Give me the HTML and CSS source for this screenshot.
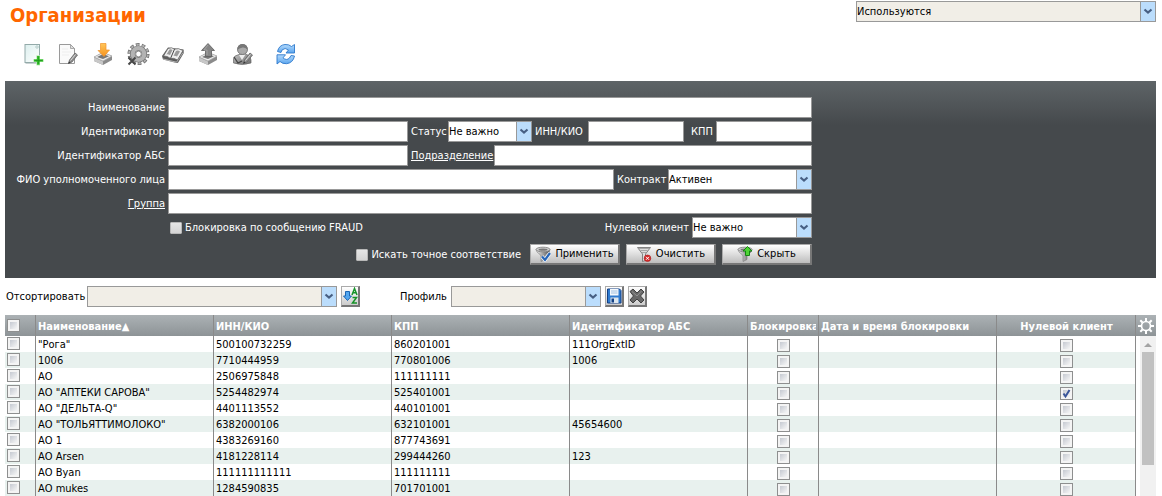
FILE: index.html
```html
<!DOCTYPE html>
<html lang="ru">
<head>
<meta charset="utf-8">
<title>Организации</title>
<link rel="stylesheet" href="styles.css">
</head>
<body>
<svg class="defs" aria-hidden="true">
  <defs>
    <linearGradient id="orange" x1="0" y1="0" x2="0" y2="1"><stop offset="0" stop-color="#ffc65a"/><stop offset="1" stop-color="#f7931e"/></linearGradient>
    <linearGradient id="gray" x1="0" y1="0" x2="1" y2="1"><stop offset="0" stop-color="#c4c4c4"/><stop offset="1" stop-color="#6c6c6c"/></linearGradient>
    <linearGradient id="steel" x1="0" y1="0" x2="1" y2="0"><stop offset="0" stop-color="#f4f4f4"/><stop offset="1" stop-color="#4c4c4c"/></linearGradient>
    <linearGradient id="sheet" x1="0" y1="0" x2="1" y2="1"><stop offset="0" stop-color="#dcefee"/><stop offset="1" stop-color="#ffffff"/></linearGradient>
    <linearGradient id="blue" x1="0" y1="0" x2="0" y2="1"><stop offset="0" stop-color="#b4dafc"/><stop offset="1" stop-color="#5aa5ee"/></linearGradient>
    <g id="tray">
      <path d="M3 15 12 10 21 14 21 18 12 23 3 19Z" fill="#8b8b8b"/>
      <path d="M3 15 12 10.500 21 14 12 19Z" fill="#ededed" stroke="#aaa" stroke-width=".7"/>
      <path d="M6 15 12 12 18 14.300 12 17Z" fill="#777"/>
      <path d="M3 15.500 12 19.500V23L3 19Z" fill="#c8c8c8"/>
    </g>
    <g id="pencil"><path d="M12.500 21.500 13.500 18 19 11 21.500 13 16 20Z" fill="#8e8e8e" stroke="#666" stroke-width=".8"/><path d="M14.500 18.500 19.500 12.500" stroke="#ddd"/><path d="M12.200 21.800 13 19.500 14.500 20.800Z" fill="#333"/></g>
    <g id="funnel"><path d="M1 3.500 C1 7 6 8 6 10V15.500L10 13.500V10C10 8 15 7 15 3.500Z" fill="url(#steel)" stroke="#777" stroke-width=".6"/><ellipse cx="8" cy="3.500" rx="7" ry="2.300" fill="#d6d6d6" stroke="#777" stroke-width=".8"/><ellipse cx="8" cy="3.700" rx="4.500" ry="1.100" fill="#777"/></g>
  </defs>
</svg>

<header class="page-head">
  <h1 class="title">Организации</h1>
  <select class="select muted usage" aria-label="Показывать"><option>Используются</option></select>
</header>

<nav class="toolbar" aria-label="Действия">
  <button class="tool" type="button" aria-label="Создать"><svg viewBox="0 0 24 24">
    <rect x="4" y="2.500" width="14.500" height="18" fill="url(#sheet)" stroke="#93aaa9"/><path d="M4.500 21.500H19" stroke="#c9d2d2"/><circle cx="16" cy="5" r="1.200" fill="#fff" stroke="#8fb5b0" stroke-width=".7"/>
    <path d="M15.500 13.500H19V17H22.500V20H19V23.200H15.500V20H12.500V17H15.500Z" fill="#39c22f" stroke="#fff" stroke-width=".5"/><path d="M17.300 14.500V22M13.500 18.500H21.500" stroke="#20941d" stroke-width=".8"/></svg></button>
  <button class="tool" type="button" aria-label="Изменить"><svg viewBox="0 0 24 24">
    <path d="M3.500 2.500H14.500L18.500 6.500V21.500H3.500Z" fill="#fafafa" stroke="#9a9a9a"/><path d="M14.500 2.500V6.500H18.500Z" fill="#ddd" stroke="#9a9a9a" stroke-width=".8"/><path d="M6 7H12M6 10H15M6 13H13" stroke="#eee"/><use href="#pencil"/></svg></button>
  <button class="tool" type="button" aria-label="Импорт"><svg viewBox="0 0 24 24"><use href="#tray"/>
    <path d="M9.500 1.500H15V8H18.500L13 14.500 7 8.500H9.500Z" fill="url(#orange)" stroke="#f0942b" stroke-width=".7"/></svg></button>
  <button class="tool" type="button" aria-label="Настройки"><svg viewBox="0 0 24 24">
    <circle cx="12.500" cy="12" r="9.200" fill="none" stroke="#6f6f6f" stroke-width="3.600" stroke-dasharray="3.600 2.180"/>
    <circle cx="12.500" cy="12" r="9" fill="none" stroke="#b0b0b0" stroke-width="2.600" stroke-dasharray="2.300 3.355" stroke-dashoffset="-.6"/>
    <circle cx="12.500" cy="12" r="5.800" fill="none" stroke="#747474" stroke-width="5.600"/><circle cx="12.500" cy="12" r="5.800" fill="none" stroke="#b3b3b3" stroke-width="4.200"/><circle cx="12.500" cy="12" r="2.800" fill="#fff" stroke="#777" stroke-width=".8"/>
    <path d="M2.500 15.500 9.500 22.500M9.500 15.500 2.500 22.500" stroke="#484848" stroke-width="2"/></svg></button>
  <button class="tool" type="button" aria-label="Справочник"><svg viewBox="0 0 24 24">
    <path d="M7 5.500 22.500 7.500 22.800 11 17 20.800 15.500 21 2 17.500 1 14Z" fill="#5d5d5d"/><path d="M2 17 15.500 20.200 22 10.500" fill="none" stroke="#ccc" stroke-width=".8"/><path d="M2.500 14 7 6.500Q11 4.800 13.500 7.200Q17 5.500 22 8.500L16.500 18Q12.500 15.500 9.500 16.500Q6.500 13.800 2.500 14Z" fill="#eee" stroke="#666" stroke-width=".8"/><path d="M13.500 7.200 9.500 16.500" stroke="#444"/><path d="M8.500 7.500Q10 7 11.500 8L9 13Q7 12 5.500 12.500ZM15 9Q17 8 19 9.500L16 14.500Q14 13.500 12.500 14Z" fill="#999"/></svg></button>
  <button class="tool" type="button" aria-label="Экспорт"><svg viewBox="0 0 24 24"><use href="#tray"/>
    <path d="M12 1.500 18.500 8.500H15.500V14.500H9.500V8.500H5.500Z" fill="#858585" stroke="#5d5d5d" stroke-width=".8"/><path d="M12 3 8 8H11V13" fill="none" stroke="#aaa" stroke-width=".8"/></svg></button>
  <button class="tool" type="button" aria-label="Пользователь"><svg viewBox="0 0 24 24">
    <path d="M2.500 21V16.500Q3 13.500 8 12.500L15 12Q20 14 20 18V21Q11 24 2.500 21Z" fill="url(#gray)" stroke="#686868" stroke-width=".7"/><path d="M8 13 11 18 14.500 12.500Z" fill="#eee"/><circle cx="11.500" cy="7.500" r="5" fill="#aaa" stroke="#6b6b6b" stroke-width=".8"/><path d="M6.500 8Q6 2 11.500 2T16.500 8Q15 5 11.500 5.500T6.500 8Z" fill="#777"/><path d="M3 15 7 21 11 19" fill="none" stroke="#444" stroke-width="1.300"/><use href="#pencil"/></svg></button>
  <button class="tool refresh" type="button" aria-label="Обновить"><svg viewBox="0 0 24 24">
    <g fill="url(#blue)" stroke="#2d78cc" stroke-width=".9"><path d="M3.500 9.500Q5 3 11 2.500 15 2.200 17.500 4.500L20.500 2.500V11H12L14.500 8Q11 5 8 8L7 10.500Z"/><path d="M20.500 14Q19 21 12.500 21.700 8.500 22 6 19.500L3 22V12.800H11.500L9 15.800Q12.500 19 15.500 16L17 13.500Z"/></g></svg></button>
</nav>

<form class="filter">
  <div class="fields">
    <div class="row"><label class="lead" for="name">Наименование</label><input class="text grow" id="name" type="text"></div>
    <div class="row"><label class="lead" for="ident">Идентификатор</label><input class="text grow" id="ident" type="text">
      <label class="cap w34" for="status">Статус</label><select class="select w84" id="status"><option>Не важно</option></select>
      <label class="cap w50" for="inn">ИНН/КИО</label><input class="text w96" id="inn" type="text">
      <label class="cap w26 right" for="kpp">КПП</label><input class="text w96" id="kpp" type="text"></div>
    <div class="row"><label class="lead" for="abs">Идентификатор АБС</label><input class="text grow" id="abs" type="text">
      <a class="cap w80" href="#">Подразделение</a><input class="text w318" type="text" aria-label="Подразделение"></div>
    <div class="row"><label class="lead" for="person">ФИО уполномоченного лица</label><input class="text grow" id="person" type="text">
      <label class="cap w48" for="contract">Контракт</label><select class="select w144" id="contract"><option>Активен</option></select></div>
    <div class="row"><span class="lead"><a href="#">Группа</a></span><input class="text grow" type="text" aria-label="Группа"></div>
    <div class="row"><span class="lead"></span><span class="tick grow"><input class="flat" id="fraud" type="checkbox"><label for="fraud">Блокировка по сообщению FRAUD</label></span>
      <label class="cap" for="zero">Нулевой клиент</label><select class="select w120" id="zero"><option>Не важно</option></select></div>
    <div class="row actions"><span class="tick"><input class="flat" id="exact" type="checkbox"><label for="exact">Искать точное соответствие</label></span>
      <button class="btn" type="button"><svg viewBox="0 0 16 16"><use href="#funnel"/><path d="M7 10.500 10 14 15 7" fill="none" stroke="#fff" stroke-width="3.500"/><path d="M7 10.500 10 14 15 7" fill="none" stroke="#2766b8" stroke-width="2.300"/></svg>Применить</button>
      <button class="btn" type="button"><svg viewBox="0 0 16 16"><path d="M1.500 1.500H14.500L9.500 8V14.500L6.500 15.500V8Z" fill="#ddd" stroke="#777" stroke-width=".9"/><path d="M3 2.500H13M4.500 4.500H11.500M6 6.500H10" stroke="#999" stroke-width=".8"/><circle cx="11.500" cy="12.300" r="3.300" fill="#d52b2b" stroke="#a31515" stroke-width=".6"/><path d="M10 10.800 13 13.800M13 10.800 10 13.800" stroke="#fff"/></svg>Очистить</button>
      <button class="btn" type="button"><svg viewBox="0 0 16 16"><use href="#funnel"/><path d="M10.500 .5 15 5H12.500V9.500H8.500V5H6Z" fill="#4ed434" stroke="#168414"/></svg>Скрыть</button></div>
  </div>
</form>

<section class="sorting">
  <label class="w77" for="sort">Отсортировать</label><select class="select muted w250" id="sort"><option></option></select>
  <button class="mini" type="button" aria-label="Направление сортировки"><svg viewBox="0 0 16 18"><path d="M3.500 4.500H7.500V9H9.500L5.500 13.500 1.500 9H3.500Z" fill="#52a6ef" stroke="#1b66b4"/><path d="M10 8 12.500 1.500 15 8M11 5.800H14M10.500 10.500H14.500L10.500 16H15" fill="none" stroke="#169329" stroke-width="1.500"/></svg></button>
  <label class="profile" for="profile">Профиль</label><select class="select muted w150" id="profile"><option></option></select>
  <button class="mini" type="button" aria-label="Сохранить профиль"><svg viewBox="0 0 16 18"><path d="M1.500 2H13.500L15 3.500V16H1.500Z" fill="#2f7bd0" stroke="#123f83"/><rect x="4" y="2" width="8.500" height="6.500" fill="#f4f8fc"/><path d="M5 4H11.500M5 6H11.500" stroke="#8eb1d9" stroke-width=".8"/><rect x="4.500" y="10.500" width="8" height="5.500" fill="#dce6ee"/><rect x="5.500" y="11.500" width="2.500" height="4" fill="#123f83"/></svg></button>
  <button class="mini" type="button" aria-label="Удалить профиль"><svg viewBox="0 0 16 18"><path d="M1 4.500 4 2 8 6 12 2 15 5 11.500 9 15 13 12 16 8 12 4 16 1 13 4.500 9Z" fill="#686868" stroke="#414141"/><path d="M3 4.500 8 9 12.500 4" fill="none" stroke="#929292"/></svg></button>
</section>

<main class="list">
  <table class="grid">
    <colgroup><col class="c-tick"><col class="c-data"><col class="c-data"><col class="c-data"><col class="c-data"><col class="c-block"><col class="c-data"><col></colgroup>
    <thead><tr><th><input class="box" type="checkbox" aria-label="Выбрать все"></th><th>Наименование▲</th><th>ИНН/КИО</th><th>КПП</th><th>Идентификатор АБС</th><th><span class="clip">Блокировка</span></th><th>Дата и время блокировки</th><th class="mid">Нулевой клиент</th></tr></thead>
    <tbody>
      <tr><td><input class="box" type="checkbox" aria-label="Выбрать"></td><td>"Рога"</td><td>500100732259</td><td>860201001</td><td>111OrgExtID</td><td class="mid"><input class="box" type="checkbox" aria-label="Блокировка"></td><td></td><td class="mid"><input class="box" type="checkbox" aria-label="Нулевой клиент"></td></tr>
      <tr><td><input class="box" type="checkbox" aria-label="Выбрать"></td><td>1006</td><td>7710444959</td><td>770801006</td><td>1006</td><td class="mid"><input class="box" type="checkbox" aria-label="Блокировка"></td><td></td><td class="mid"><input class="box" type="checkbox" aria-label="Нулевой клиент"></td></tr>
      <tr><td><input class="box" type="checkbox" aria-label="Выбрать"></td><td>АО</td><td>2506975848</td><td>111111111</td><td></td><td class="mid"><input class="box" type="checkbox" aria-label="Блокировка"></td><td></td><td class="mid"><input class="box" type="checkbox" aria-label="Нулевой клиент"></td></tr>
      <tr><td><input class="box" type="checkbox" aria-label="Выбрать"></td><td>АО "АПТЕКИ САРОВА"</td><td>5254482974</td><td>525401001</td><td></td><td class="mid"><input class="box" type="checkbox" aria-label="Блокировка"></td><td></td><td class="mid"><input class="box" type="checkbox" aria-label="Нулевой клиент" checked></td></tr>
      <tr><td><input class="box" type="checkbox" aria-label="Выбрать"></td><td>АО "ДЕЛЬТА-Q"</td><td>4401113552</td><td>440101001</td><td></td><td class="mid"><input class="box" type="checkbox" aria-label="Блокировка"></td><td></td><td class="mid"><input class="box" type="checkbox" aria-label="Нулевой клиент"></td></tr>
      <tr><td><input class="box" type="checkbox" aria-label="Выбрать"></td><td>АО "ТОЛЬЯТТИМОЛОКО"</td><td>6382000106</td><td>632101001</td><td>45654600</td><td class="mid"><input class="box" type="checkbox" aria-label="Блокировка"></td><td></td><td class="mid"><input class="box" type="checkbox" aria-label="Нулевой клиент"></td></tr>
      <tr><td><input class="box" type="checkbox" aria-label="Выбрать"></td><td>АО 1</td><td>4383269160</td><td>877743691</td><td></td><td class="mid"><input class="box" type="checkbox" aria-label="Блокировка"></td><td></td><td class="mid"><input class="box" type="checkbox" aria-label="Нулевой клиент"></td></tr>
      <tr><td><input class="box" type="checkbox" aria-label="Выбрать"></td><td>АО Arsen</td><td>4181228114</td><td>299444260</td><td>123</td><td class="mid"><input class="box" type="checkbox" aria-label="Блокировка"></td><td></td><td class="mid"><input class="box" type="checkbox" aria-label="Нулевой клиент"></td></tr>
      <tr><td><input class="box" type="checkbox" aria-label="Выбрать"></td><td>АО Byan</td><td>111111111111</td><td>111111111</td><td></td><td class="mid"><input class="box" type="checkbox" aria-label="Блокировка"></td><td></td><td class="mid"><input class="box" type="checkbox" aria-label="Нулевой клиент"></td></tr>
      <tr><td><input class="box" type="checkbox" aria-label="Выбрать"></td><td>АО mukes</td><td>1284590835</td><td>701701001</td><td></td><td class="mid"><input class="box" type="checkbox" aria-label="Блокировка"></td><td></td><td class="mid"><input class="box" type="checkbox" aria-label="Нулевой клиент"></td></tr>
    </tbody>
  </table>
  <div class="side">
    <button class="gear" type="button" aria-label="Настройка столбцов"><svg viewBox="0 0 16 16"><circle cx="8" cy="8" r="4.500" fill="none" stroke="#fff" stroke-width="1.700"/><path d="M8 0V3M8 13V16M0 8H3M13 8H16M2.300 2.300 4.500 4.500M11.500 11.500 13.700 13.700M2.300 13.700 4.500 11.500M11.500 4.500 13.700 2.300" stroke="#fff" stroke-width="2"/></svg></button>
    <div class="scroll"><svg class="up" viewBox="0 0 8 4"><path d="M0 4 4 0 8 4Z" fill="#a3a3a3"/></svg><div class="thumb"></div></div>
  </div>
</main>
</body>
</html>
```
FILE: styles.css
```css
* { box-sizing: border-box; }

body {
  margin: 0;
  padding: 0 6px 0 5px;
  background: #fff;
  color: #000;
  font: 11px/16px Tahoma, "DejaVu Sans Condensed", "Noto Sans", sans-serif;
}

input, select, button { font: inherit; margin: 0; border-radius: 0; }
a { color: inherit; text-decoration: underline; }
.defs { position: absolute; width: 0; height: 0; }

/* Page head */
.page-head { display: flex; justify-content: space-between; align-items: flex-start; padding-top: 1px; }
.title { margin: 0; padding: 2px 0 0 5px; color: #f60; font-size: 20px; line-height: 24px; font-weight: bold; }
.usage { width: 300px; }

/* Toolbar */
.toolbar { display: flex; gap: 11px; padding: 15px 0 15px 16px; }
.tool { width: 24px; height: 24px; padding: 0; border: 0; background: none; }
.tool svg { display: block; width: 24px; height: 24px; }
.refresh { margin-left: 8px; }

/* Inputs */
.text { height: 21px; min-width: 0; padding: 0 2px; border: 1px solid #999; background: #fff; }
.select {
  height: 21px;
  padding: 1px 16px 0 0;
  border: 1px solid #999;
  appearance: none;
  color: #000;
  background-color: #fff;
  background-image:
    url("data:image/svg+xml,%3Csvg xmlns='http://www.w3.org/2000/svg' width='10' height='7'%3E%3Cpath d='M1.500 1.500 5 4.500 8.500 1.500' fill='none' stroke='%23475f83' stroke-width='2.200'/%3E%3C/svg%3E"),
    linear-gradient(#bbddfc, #bbddfc),
    linear-gradient(#999, #999);
  background-repeat: no-repeat;
  background-position: right 2px center, right center, right center;
  background-size: 10px 7px, 14px 100%, 15px 100%;
}
.muted { background-color: #f1eee7; }

.w26 { width: 26px; }
.w34 { width: 34px; }
.w48 { width: 48px; }
.w50 { width: 50px; }
.w77 { width: 77px; }
.w80 { width: 80px; }
.w84 { width: 84px; }
.w96 { width: 96px; }
.w120 { width: 120px; }
.w144 { width: 144px; }
.w150 { width: 150px; }
.w250 { width: 250px; }
.w318 { width: 318px; }

/* Filter panel */
.filter {
  padding: 16px 0 13px;
  background: linear-gradient(#5e6467, #45494c 44px);
  color: #fff;
}
.fields { display: flex; flex-direction: column; gap: 3px; max-width: 807px; }
.row { display: flex; align-items: center; gap: 3px; }
.row > * { flex: none; white-space: nowrap; }
.row > .grow { flex: 1 1 0; }
.lead { width: 160px; text-align: right; }
.right { text-align: right; }
.tick { display: flex; align-items: center; gap: 3px; padding-left: 2px; }
.actions { justify-content: flex-end; gap: 6px; padding-top: 3px; }
.actions .tick { padding-right: 3px; }
.flat {
  appearance: none;
  width: 12px;
  height: 12px;
  border: 1px solid #b8b8b8;
  border-radius: 1px;
  background: linear-gradient(#e6e6e6, #d4d4d4);
}
.btn {
  display: flex;
  justify-content: center;
  align-items: center;
  gap: 4px;
  width: 90px;
  height: 21px;
  padding: 0;
  border: 1px solid #aaa;
  border-right: 2px solid #777;
  border-bottom: 2px solid #777;
  background: linear-gradient(#fff, #bdbdbd);
  color: #000;
}
.btn svg { width: 16px; height: 16px; }

/* Sorting bar */
.sorting { display: flex; align-items: center; gap: 4px; padding: 8px 0 8px 1px; white-space: nowrap; }
.profile { width: 47px; margin-left: 36px; }
.mini {
  width: 19px;
  height: 21px;
  padding: 0;
  border: 1px solid #aaa;
  border-right: 2px solid #777;
  border-bottom: 2px solid #777;
  background: linear-gradient(#fff, #ccc);
}
.mini svg { display: block; width: 16px; height: 18px; }

/* Table */
.list { display: flex; }
.grid { flex: 1 1 0; min-width: 0; width: 0; table-layout: fixed; border-collapse: separate; border-spacing: 0; }
.c-tick { width: 31px; }
.c-data { width: 178px; }
.c-block { width: 71px; }
.grid th, .grid td {
  padding: 2px 2px 0;
  border-right: 1px solid #8a8a8a;
  overflow: hidden;
  white-space: nowrap;
  text-align: left;
  line-height: 14px;
}
.grid thead tr, .gear { background: linear-gradient(#acb2b5, #8d9396); }
.grid th { height: 21px; color: #fff; }
.grid td { height: 16px; }
.grid th:first-child { padding-top: 0; }
.grid td:first-child { padding-top: 1px; vertical-align: top; }
.grid tbody tr:nth-child(even) { background: #e8f1ee; }
.grid .mid { padding-left: 3px; text-align: center; }
.clip { display: block; overflow: hidden; }
.box {
  display: block;
  appearance: none;
  width: 13px;
  height: 13px;
  border: 1px solid #8e8f8f;
  background: linear-gradient(135deg, #c5c9d1, #f6f6f6) content-box, #f4f4f4;
  padding: 2px;
}
.mid .box { margin: 0 auto; }
.box:checked {
  background: url("data:image/svg+xml,%3Csvg xmlns='http://www.w3.org/2000/svg' width='11' height='11'%3E%3Cpath d='M2.500 5.500 4.500 8.500 8.500 2' fill='none' stroke='%233a5599' stroke-width='2'/%3E%3C/svg%3E") border-box center no-repeat, linear-gradient(135deg, #c5c9d1, #f6f6f6) content-box, #f4f4f4;
}
.side { display: flex; flex-direction: column; flex: none; width: 20px; }
.gear { height: 21px; padding: 0; border: 0; }
.gear svg { display: block; width: 16px; height: 16px; margin: 0 auto; }
.scroll { flex: 1; width: 16px; margin-left: 4px; background: #f1f1f1; }
.up { display: block; width: 8px; height: 4px; margin: 7px 4px 5px; }
.thumb { width: 12px; height: 113px; margin-left: 2px; background: #c1c1c1; }
```
